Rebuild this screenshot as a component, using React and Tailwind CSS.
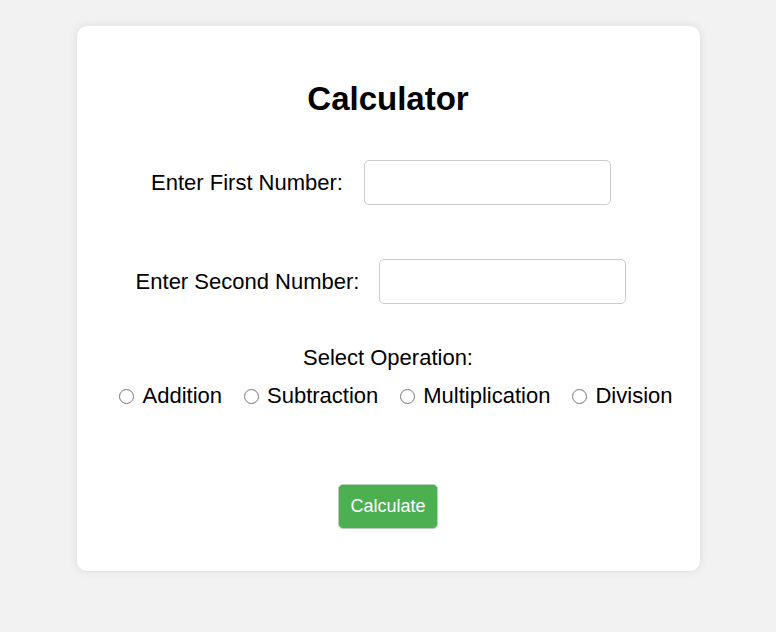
import React, { useState } from 'react';

const operations = ['Addition', 'Subtraction', 'Multiplication', 'Division'];

const App = () => {
  const [first, setFirst] = useState('');
  const [second, setSecond] = useState('');
  const [op, setOp] = useState('');

  return (
    <div className="min-h-screen bg-[#f2f2f2] pt-[26px] text-black font-['Liberation_Sans',Arial,sans-serif]">
      <div className="mx-auto w-[623px] h-[545px] bg-white rounded-[10px] shadow-[0_0_10px_rgba(0,0,0,0.1)] flex flex-col items-center pt-[54px]">
        <h1 className="text-[33px] leading-[38px] font-bold">Calculator</h1>

        <div className="mt-[42px] flex items-center gap-[21px] pr-[14px]">
          <label className="text-[22px] leading-[26px]">Enter First Number:</label>
          <input
            type="text"
            value={first}
            onChange={(e) => setFirst(e.target.value)}
            className="w-[247px] h-[45px] border border-[#ccc] rounded-[5px] px-2 outline-none"
          />
        </div>

        <div className="mt-[54px] flex items-center gap-[20px] pr-[14px]">
          <label className="text-[22px] leading-[26px]">Enter Second Number:</label>
          <input
            type="text"
            value={second}
            onChange={(e) => setSecond(e.target.value)}
            className="w-[247px] h-[45px] border border-[#ccc] rounded-[5px] px-2 outline-none"
          />
        </div>

        <p className="mt-[41px] text-[22px] leading-[26px]">Select Operation:</p>

        <div className="mt-[12px] flex items-center gap-[22px] pl-[16px] text-[22px] leading-[26px]">
          {operations.map((name) => (
            <label key={name} className="flex items-center gap-[8px]">
              <input
                type="radio"
                name="operation"
                checked={op === name}
                onChange={() => setOp(name)}
                className="appearance-none m-0 w-[15px] h-[15px] rounded-full border border-[#767676] bg-white checked:border-[4px] checked:border-[#0075ff]"
              />
              {name}
            </label>
          ))}
        </div>

        <button className="mt-[75px] w-[100px] h-[45px] bg-[#4caf50] text-white text-[18px] rounded-[5px] border border-[#b9cfb9]">
          Calculate
        </button>
      </div>
    </div>
  );
};

export default App;
